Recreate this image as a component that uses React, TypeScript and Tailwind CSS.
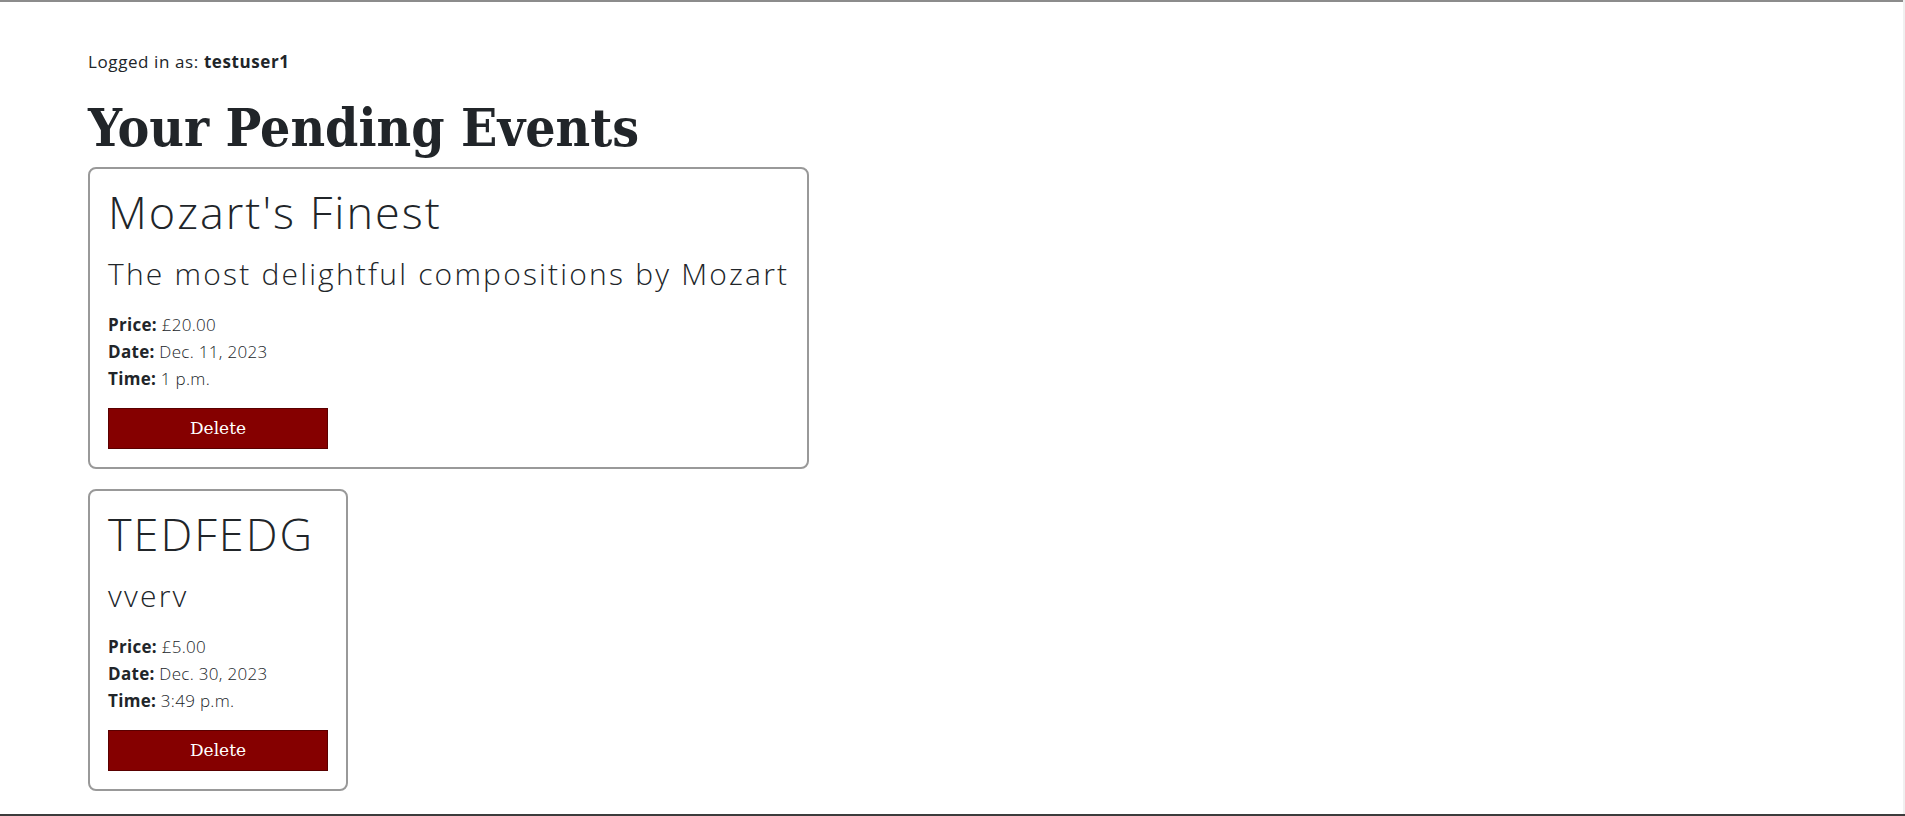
import React from "react";

type PendingEvent = {
  id: number;
  title: string;
  description: string;
  price: string;
  date: string;
  time: string;
};

const events: PendingEvent[] = [
  {
    id: 1,
    title: "Mozart's Finest",
    description: "The most delightful compositions by Mozart",
    price: "£20.00",
    date: "Dec. 11, 2023",
    time: "1 p.m.",
  },
  {
    id: 2,
    title: "TEDFEDG",
    description: "vverv",
    price: "£5.00",
    date: "Dec. 30, 2023",
    time: "3:49 p.m.",
  },
];

const sans = "font-['Open_Sans',sans-serif]";
const serif = "font-['DejaVu_Serif',serif]";

const EventCard = ({ event }: { event: PendingEvent }) => {
  return (
    <div className="w-fit rounded-[8px] border-2 border-[#999999] px-[18px] pt-[16px] pb-[18px]">
      {/* Title */}
      <h2 className={`${sans} text-[45px] leading-[54px] font-light tracking-[2px] text-[#212529]`}>
        {event.title}
      </h2>

      {/* Description */}
      <h3 className={`${sans} mt-[16px] text-[30px] leading-[38px] font-light tracking-[2.2px] text-[#212529]`}>
        {event.description}
      </h3>

      {/* Details */}
      <div className={`${sans} mt-[18px] text-[17px] leading-[27px] tracking-[0.3px] text-[#212529]`}>
        <p>
          <span className="font-bold">Price:</span> <span className="font-light">{event.price}</span>
        </p>
        <p>
          <span className="font-bold">Date:</span> <span className="font-light">{event.date}</span>
        </p>
        <p>
          <span className="font-bold">Time:</span> <span className="font-light">{event.time}</span>
        </p>
      </div>

      <button
        className={`${serif} mt-[16px] block h-[41px] w-[220px] border border-[#5a0000] bg-[#850000] text-[17px] text-white`}
      >
        Delete
      </button>
    </div>
  );
};

export default function App() {
  return (
    <div className="flex h-[816px] w-full flex-col bg-white">
      <div className="flex min-h-0 flex-1">
        <main className="flex-1 border-t-2 border-[#8c8c8c] pl-[88px] pt-[48px]">
          <p className={`${sans} text-[17px] leading-[24px] tracking-[0.6px] text-[#212529]`}>
            Logged in as: <span className="font-bold">testuser1</span>
          </p>

          <h1
            className={`${serif} mt-[21px] text-[53px] leading-[64px] font-bold font-stretch-condensed text-[#212529]`}
          >
            Your Pending Events
          </h1>

          <div className="mt-[8px] flex flex-col gap-[20px]">
            {events.map((event) => (
              <EventCard key={event.id} event={event} />
            ))}
          </div>
        </main>
        <div className="w-[2px] bg-[#f0f0f0]" />
      </div>
      <div className="h-[2px] w-full bg-[#3c3c3c]" />
    </div>
  );
}
